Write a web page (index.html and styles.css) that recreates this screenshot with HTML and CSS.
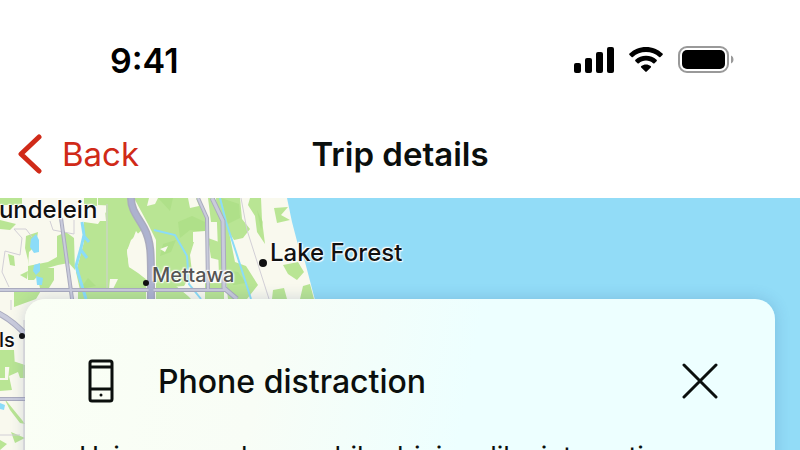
FILE: index.html
```html
<!DOCTYPE html>
<html lang="en">

<head>
    <meta charset="UTF-8">
    <meta name="viewport" content="width=device-width, initial-scale=1.0">
    <title>Trip details</title>
    <link rel="stylesheet" href="styles.css">
</head>

<body>
    <header>
        <div class="status-bar">
            <span class="time">9:41</span>
            <div class="status-icons">
                <svg class="signal" width="40" height="26" viewBox="0 0 40 26" aria-hidden="true">
                    <rect x="0" y="16" width="7" height="10" rx="2"/>
                    <rect x="11" y="11" width="7" height="15" rx="2"/>
                    <rect x="22" y="5" width="7" height="21" rx="2"/>
                    <rect x="33" y="0" width="7" height="26" rx="2"/>
                </svg>
                <svg class="wifi" width="34" height="26" viewBox="0 0 34 26" aria-hidden="true">
                    <path d="M17 0C10.500 0 4.700 2.500 0.500 6.600Q-0.200 7.300 0.500 8L2.600 10Q3.200 10.600 3.900 10C7.400 6.800 12 5 17 5C22 5 26.600 6.800 30.100 10Q30.800 10.600 31.400 10L33.500 8Q34.200 7.300 33.500 6.600C29.300 2.500 23.500 0 17 0Z"/>
                    <path d="M17 8.700C12.900 8.700 9.200 10.200 6.400 12.800Q5.700 13.500 6.400 14.200L8.500 16.200Q9.100 16.800 9.900 16.200C11.800 14.600 14.300 13.600 17 13.600C19.700 13.600 22.200 14.600 24.100 16.200Q24.900 16.800 25.500 16.200L27.600 14.200Q28.300 13.500 27.600 12.800C24.800 10.200 21.100 8.700 17 8.700Z"/>
                    <path d="M17 17.500C15.200 17.500 13.600 18.100 12.300 19.100Q11.500 19.800 12.200 20.500L16.300 24.600Q17 25.300 17.700 24.600L21.800 20.500Q22.500 19.800 21.700 19.100C20.400 18.100 18.800 17.500 17 17.500Z"/>
                </svg>
                <svg class="battery" width="56" height="28" viewBox="0 0 56 28" aria-hidden="true">
                    <rect x="1" y="1" width="49" height="25" rx="8" fill="none" stroke="#999" stroke-width="2"/>
                    <rect x="4" y="4" width="43" height="19" rx="5"/>
                    <path d="M53 9.500C56.300 10.800 56.300 16.200 53 17.500Z" fill="#999"/>
                </svg>
            </div>
        </div>
        <nav>
            <a class="back" href="#">
                <svg width="24" height="40" viewBox="0 0 24 40" aria-hidden="true">
                    <path d="M21 3L3 20L21 37" fill="none" stroke="#d02a18" stroke-width="5" stroke-linecap="round" stroke-linejoin="round"/>
                </svg>
                Back
            </a>
            <h1>Trip details</h1>
        </nav>
    </header>

    <main class="map">
        <svg class="map-art" viewBox="0 198 800 252" preserveAspectRatio="xMinYMin slice" aria-hidden="true">
            <rect y="198" width="800" height="252" fill="#f9f9ee"/>
            <!-- parks and woods -->
            <g fill="#b9e594">
                <path d="M0 198H22V205H0ZM0 220L16 224L10 230L0 229ZM98 198H128V203L120 206L98 205ZM84 198H97V206H84Z"/>
                <path d="M26 236L38 232L36 245L29 252L28 266L48 262L66 252V242H74V262L58 265L44 269L34 280H28V260L25 248Z"/>
                <path d="M8 254L14 256L15 266L10 265ZM20 275L28 271L27 279ZM44 268H54V280L49 288H40L37 276ZM14 289H42L36 299L25 303L14 307Z"/>
                <path d="M84 222L98 224L106 212L106 198H131L146 231V244L136 231L131 244L127 250L129 267L138 273L147 280L146 290H80L76 272L84 242Z"/>
                <path d="M57 236L66 232L74 238L75 270L68 262L57 257ZM78 290H146V300H78Z"/>
                <path d="M134 198H198L206 218L205 240L194 242L190 255L192 272L184 286L156 288V240L148 224Z"/>
                <path d="M156 286H176L188 296L192 300H156ZM208 198H215L220 222H211ZM208 238L219 242V260L211 258ZM205 283H224V299H205Z"/>
                <path d="M216 198H240L242 219L250 229L243 238L234 240L229 232L235 262L246 266L258 285L247 299H228L226 282L219 275Z"/>
                <path d="M250 198H261L262 220L265 244L257 232L255 216L248 205ZM274 208L288 207L281 215L290 220L277 223ZM283 265L298 262L304 272L297 280L288 274ZM303 286L310 284L314 299H300ZM273 290L284 288L287 299H272Z"/>
                <path d="M0 350L14 350L15 367H5V378H0ZM10 360L25 365V378H20L18 372L9 376L12 390L0 391V380H8ZM4 398L22 420L25 424L20 423L10 410ZM11 432L25 438L15 443ZM0 440L7 444L0 450Z"/>
            </g>
            <g fill="#9fd979" opacity=".4">
                <path d="M178 222L192 216L205 222V232L190 230L180 238ZM158 198L173 198L170 211ZM221 198L239 204L240 218L228 224ZM163 244L176 240L171 252L160 256ZM226 270L238 272L246 283L233 285ZM88 278L96 286L80 289ZM257 210L263 222L261 230Z"/>
            </g>
            <g fill="#f9f9ee">
                <path d="M143 229L131 240L127 251L129 267L143 272L150 278V234ZM95 209L105 210L106 221L95 221ZM110 279L118 279L113 289H109ZM149 198L158 198L155 204L147 206ZM160 249L168 246L165 252ZM193 232L205 231V243L193 242ZM188 198L196 198L199 206L190 208Z"/>
            </g>
            <!-- lake and ponds -->
            <path d="M287 198H800V450H500L315 300L305 262L298 245L292 222Z" fill="#92dcf7"/>
            <g fill="#8bdcf8">
                <path d="M31 239L36 234L39 240V252L34 253L30 247ZM34 265L40 263L40 271L36 275L33 271ZM36 276L43 278L42 285L37 285ZM0 403L5 405L4 410L0 409Z"/>
            </g>
            <g fill="none" stroke="#8bdcf8" stroke-width="2">
                <path d="M82 222L84 235L81 248L76 266L79 276L86 299M83 235L89 242M81 250L87 258" stroke-width="3"/>
                <path d="M154 230L175 235L187 256L189 284L201 299"/>
                <path d="M220 198L226 222L236 252L251 299"/>
            </g>
            <!-- small boundaries -->
            <g fill="none" stroke="#d2cfd6" stroke-width="1">
                <path d="M107 204V289M14 229L22 238L20 255L5 251L2 272L9 287M50 221L53 230L74 234V220M14 229H26L32 237M241 198L247 230L269 299M0 435H20M11 300V310M24 320L24 450"/>
            </g>
            <!-- roads -->
            <g fill="none" stroke="#aaabbe" stroke-linejoin="round">
                <path d="M61 218L73 306" stroke-width="4"/>
                <path d="M0 290H225M0 399H26" stroke-width="4"/>
                <path d="M198 198L207 218L208 290" stroke-width="4"/>
                <path d="M212 198L223 221L224 288L237 299" stroke-width="5"/>
                <path d="M131 198C131 210 138 217 144 228C152 243 151 255 151 300" stroke-width="8"/>
                <path d="M-2 313C10 319 18 326 28 337" stroke-width="6"/>
            </g>
            <g fill="none" stroke="#c9cbdc" stroke-linejoin="round">
                <path d="M61 218L73 306M0 290H225M0 399H26M198 198L207 218L208 290" stroke-width="2"/>
                <path d="M212 198L223 221L224 288L237 299" stroke-width="3"/>
                <path d="M-2 313C10 319 18 326 28 337" stroke-width="4"/>
            </g>
            <path d="M131 198C131 210 138 217 144 228C152 243 151 255 151 300" fill="none" stroke="#adb2cf" stroke-width="5"/>
            <g fill="#111">
                <circle cx="146" cy="283" r="3"/>
                <circle cx="263" cy="263" r="4"/>
                <circle cx="22" cy="336" r="3"/>
            </g>
        </svg>
        <span class="place mundelein">Mundelein</span>
        <span class="place lake-forest">Lake Forest</span>
        <span class="place mettawa">Mettawa</span>
        <span class="place hills">Hills</span>

        <section class="card">
            <div class="card-header">
                <svg class="phone" width="26" height="44" viewBox="0 0 26 44" fill="none" stroke="#0b0f0d" stroke-width="3" aria-hidden="true">
                    <rect x="2" y="2" width="22" height="40" rx="2"/>
                    <path d="M2 8H24M2 30H24"/>
                    <circle cx="13" cy="36" r="1.500" fill="#0b0f0d" stroke="none"/>
                </svg>
                <h2>Phone distraction</h2>
                <button class="close" type="button" aria-label="Close">
                    <svg width="36" height="36" viewBox="0 0 36 36" aria-hidden="true">
                        <path d="M2 2L34 34M34 2L2 34" stroke="#0b0f0d" stroke-width="3" stroke-linecap="round"/>
                    </svg>
                </button>
            </div>
            <p>Using your phone while driving, like interacting</p>
        </section>
    </main>
</body>

</html>
```
FILE: styles.css
```css
* {
    box-sizing: border-box;
}

body {
    display: flex;
    flex-direction: column;
    height: 100vh;
    margin: 0;
    overflow: hidden;
    font-family: Inter, "Liberation Sans", sans-serif;
    background-color: #fff;
    color: #0b0f0d;
}

header {
    flex: none;
}

.status-bar {
    display: flex;
    justify-content: space-between;
    align-items: center;
    height: 120px;
    padding: 0 66px 0 110px;
}

.time {
    font-size: 34px;
    font-weight: 600;
    color: #000;
}

.status-icons {
    display: flex;
    align-items: center;
    gap: 15px;
}

nav {
    display: grid;
    grid-template-columns: 1fr auto 1fr;
    align-items: center;
    height: 78px;
    padding: 0 18px 10px;
}

.back {
    display: flex;
    align-items: center;
    gap: 20px;
    font-size: 33px;
    color: #d02a18;
    text-decoration: none;
}

h1 {
    margin: 0;
    font-size: 33px;
    font-weight: 600;
}

.map {
    position: relative;
    flex: 1;
    padding: 101px 25px 0;
    overflow: hidden;
}

.map-art {
    position: absolute;
    top: 0;
    left: 0;
    width: 100%;
    height: 100%;
}

/* town names pinned on the map */
.place {
    position: absolute;
    font-size: 24px;
    line-height: 30px;
    font-weight: 500;
    color: #111;
    white-space: nowrap;
    text-shadow: 0 0 2px #fff, 0 0 3px #fff, 1px 1px 1px #fff, -1px -1px 1px #fff;
}

.mundelein {
    top: -3px;
    left: -23px;
}

.lake-forest {
    top: 40px;
    left: 270px;
}

.mettawa {
    top: 62px;
    left: 152px;
    font-size: 20px;
    color: #555;
}

.hills {
    top: 127px;
    left: -26px;
    font-size: 20px;
}

.card {
    position: relative;
    height: 400px;
    padding: 56px 54px;
    border-radius: 20px;
    background: linear-gradient(100deg, #fafff5 0%, #f8fdf6 30%, #edffff 56%, #edffff 100%);
    box-shadow: 0 0 16px rgba(40, 70, 130, 0.2);
}

.card-header {
    display: flex;
    align-items: center;
    height: 52px;
    padding: 0 3px 0 9px;
}

h2 {
    flex: 1;
    margin: 0 0 0 44px;
    font-size: 32px;
    font-weight: 500;
}

.close {
    display: flex;
    padding: 0;
    border: none;
    background: none;
    cursor: pointer;
}

.card p {
    margin: 31px 0 0;
    font-size: 27px;
    line-height: 38px;
    white-space: nowrap;
}
```
